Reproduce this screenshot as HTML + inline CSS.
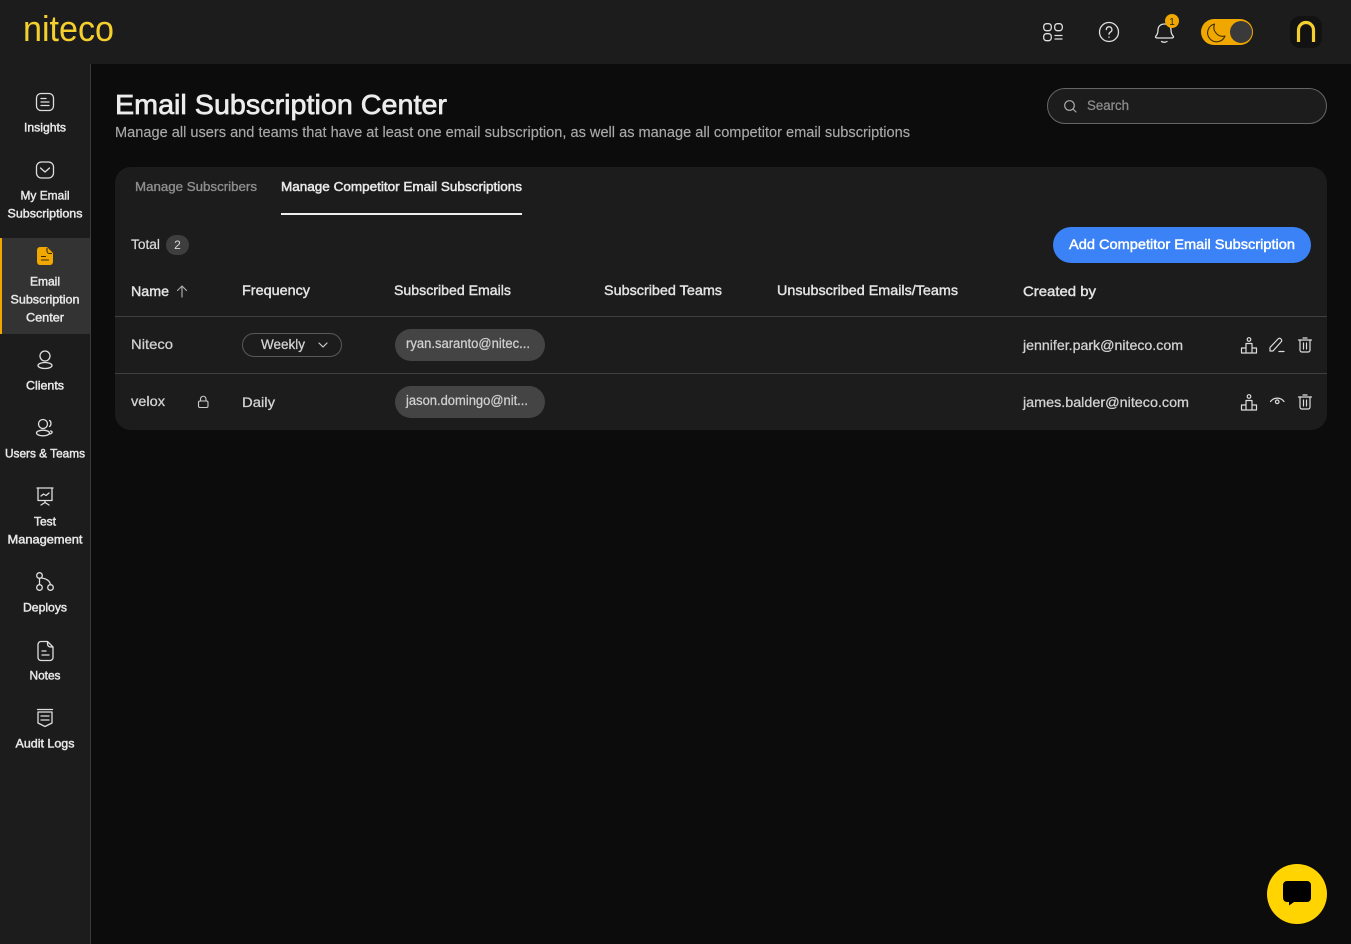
<!DOCTYPE html>
<html lang="en">
<head>
<meta charset="utf-8">
<title>Email Subscription Center</title>
<style>
html,body{margin:0;padding:0;width:1351px;height:944px;overflow:hidden;background:#0c0c0c;font-family:"Liberation Sans",sans-serif}
.b{position:absolute;box-sizing:border-box}
svg{position:absolute;left:0;top:0}
text{font-family:"Liberation Sans",sans-serif}
.nav{font-size:12px;fill:#e8e8e8;text-anchor:middle;stroke:#e8e8e8;stroke-width:.45px}
.t13{font-size:14px;fill:#d2d2d2;stroke:#d2d2d2;stroke-width:.28px}
.h{font-size:14px;fill:#e4e4e4;stroke:#e4e4e4;stroke-width:.4px}
.ic{fill:none;stroke:#dedede;stroke-width:1.300;stroke-linecap:round;stroke-linejoin:round}
</style>
</head>
<body>
<div class="b" style="left:0;top:0;width:1351px;height:64px;background:#1c1c1c"></div>
<div class="b" style="left:0;top:64px;width:91px;height:880px;background:#1c1c1c;border-right:1px solid #3a3a3a"></div>
<div class="b" style="left:0;top:238px;width:90px;height:96px;background:#333;border-left:2px solid #f0a800"></div>
<div class="b" style="left:1047px;top:88px;width:280px;height:36px;background:#1c1c1c;border:1px solid #666;border-radius:18px"></div>
<div class="b" style="left:115px;top:167px;width:1212px;height:263px;background:#1c1c1c;border-radius:16px"></div>
<div class="b" style="left:281px;top:213px;width:241px;height:2px;background:#eee"></div>
<div class="b" style="left:115px;top:316px;width:1212px;height:1px;background:#404040"></div>
<div class="b" style="left:115px;top:373px;width:1212px;height:1px;background:#404040"></div>
<div class="b" style="left:166px;top:235px;width:23px;height:20px;background:#3e3e3e;border-radius:10px"></div>
<div class="b" style="left:1053px;top:227px;width:258px;height:36px;background:#3b82f6;border-radius:18px"></div>
<div class="b" style="left:242px;top:333px;width:100px;height:24px;border:1px solid #5a5a5a;border-radius:12px"></div>
<div class="b" style="left:395px;top:329px;width:150px;height:32px;background:#444;border-radius:16px"></div>
<div class="b" style="left:395px;top:386px;width:150px;height:32px;background:#444;border-radius:16px"></div>
<div class="b" style="left:1267px;top:864px;width:60px;height:60px;background:#ffd400;border-radius:50%"></div>

<svg width="1351" height="944" viewBox="0 0 1351 944">
<!-- logo -->
<text x="23" y="41" font-size="36" fill="#f5cf2e" textLength="91" lengthAdjust="spacingAndGlyphs">niteco</text>

<!-- top icons -->
<g class="ic">
<rect x="1043.700" y="23.700" width="7.600" height="7" rx="2.800"/><rect x="1054.700" y="23.700" width="7.600" height="7" rx="2.800"/><rect x="1043.700" y="33.700" width="7.600" height="7" rx="2.800"/>
<path d="M1055 35.500h7M1055 39h7"/>
<circle cx="1109" cy="32" r="9.500"/>
<path d="M1106.300 29.600a2.800 2.800 0 1 1 4.200 2.400c-1 .6-1.500 1.100-1.500 2.200"/><path d="M1109 37v.2"/>
<path d="M1164.500 24c-4 0-6.500 2.500-6.500 6 0 3.500-1 5-2.500 6.500 0 1 1 1.500 2 1.500h14c1 0 2-.5 2-1.500-1.500-1.500-2.500-3-2.500-6.500 0-3.500-2.500-6-6.500-6z"/>
<path d="M1161.500 41.500c1.800 1 3.800 1 5.500 0"/>
</g>
<circle cx="1172" cy="21" r="7" fill="#f0a800"/>
<text x="1172" y="25" font-size="10" fill="#222" text-anchor="middle">1</text>

<rect x="1201" y="19" width="52" height="26" rx="13" fill="#f0a800"/>
<circle cx="1241" cy="32" r="11" fill="#3a3a3a"/>
<path d="M1214.500 24a9 9 0 1 0 10.500 12 9 9 0 0 1-10.500-12z" fill="none" stroke="#3a2c00" stroke-width="1.100" stroke-linejoin="round"/>

<rect x="1290" y="16" width="32" height="32" rx="10" fill="#121212"/>
<path d="M1298.500 42V30a7.500 7.500 0 0 1 15 0v12" fill="none" stroke="#f5cf2e" stroke-width="3.200"/>

<!-- search -->
<circle cx="1069.500" cy="105.500" r="4.800" fill="none" stroke="#aaa" stroke-width="1.200"/>
<path d="M1073 109l3 3" stroke="#aaa" stroke-width="1.200" stroke-linecap="round"/>
<text x="1087" y="110" font-size="13.500" fill="#8a8a8a" stroke="#8a8a8a" stroke-width=".3" textLength="42" lengthAdjust="spacingAndGlyphs">Search</text>

<!-- sidebar icons -->
<g class="ic">
<rect x="36.500" y="93.500" width="17" height="17" rx="4.500"/><path d="M41 98.500h5M41 102h8M41 105.500h8"/>
<rect x="36.500" y="162" width="17" height="16" rx="5"/><path d="M40.500 168l4.500 4 4.500-4"/>
<circle cx="45" cy="356" r="5"/><ellipse cx="45" cy="365.500" rx="7" ry="3"/>
<circle cx="43" cy="424" r="4.500"/><ellipse cx="43" cy="433" rx="6.500" ry="2.800"/>
<path d="M49.500 420.500c2 1 2 4.500 0 6M50.500 431c2 0 2.500 2-.5 3"/>
<path d="M37 488h16M38 488v12.500h14V488M45 500.500v2M41 505l4-2.500 4 2.500M41 496l2.500-2 2.500 1.500 3-2.500"/>
<circle cx="39.500" cy="575.500" r="2.800"/><circle cx="39.500" cy="587.500" r="2.800"/><circle cx="50.500" cy="587.500" r="2.800"/>
<path d="M39.500 578.500v6M41.500 578c4 .5 8 2 9 6.500"/>
<path d="M41 641.500h6.500l5.500 5.500v10.500a3 3 0 0 1-3 3h-9a3 3 0 0 1-3-3V644.500a3 3 0 0 1 3-3zM47.500 641.500v2.500a3 3 0 0 0 3 3h2.500M42 651h4M42 655h7"/>
<path d="M37.500 709.500h15M38 712v11l7 3.500 7-3.500v-11zM41 716h8M41 720h8"/>
</g>
<path d="M40 247h7l6 6v9a3 3 0 0 1-3 3H40a3 3 0 0 1-3-3v-12a3 3 0 0 1 3-3z" fill="#f0a800"/>
<path d="M47 248v3a2.500 2.500 0 0 0 2.500 2.500H52M41 256.500h5M41 260h8" fill="none" stroke="#3a2c00" stroke-width="1.100"/>

<!-- sidebar labels -->
<text class="nav" x="45" y="131.500" textLength="42" lengthAdjust="spacingAndGlyphs">Insights</text>
<text class="nav" x="45" y="199.500" textLength="49" lengthAdjust="spacingAndGlyphs">My Email</text>
<text class="nav" x="45" y="217.500" textLength="75" lengthAdjust="spacingAndGlyphs">Subscriptions</text>
<text class="nav" x="45" y="285.500" textLength="30" lengthAdjust="spacingAndGlyphs">Email</text>
<text class="nav" x="45" y="303.500" textLength="69" lengthAdjust="spacingAndGlyphs">Subscription</text>
<text class="nav" x="45" y="321.500" textLength="38" lengthAdjust="spacingAndGlyphs">Center</text>
<text class="nav" x="45" y="389.500" textLength="38" lengthAdjust="spacingAndGlyphs">Clients</text>
<text class="nav" x="45" y="457.500" textLength="80" lengthAdjust="spacingAndGlyphs">Users &amp; Teams</text>
<text class="nav" x="45" y="525.500" textLength="22" lengthAdjust="spacingAndGlyphs">Test</text>
<text class="nav" x="45" y="543.500" textLength="75" lengthAdjust="spacingAndGlyphs">Management</text>
<text class="nav" x="45" y="611.500" textLength="44" lengthAdjust="spacingAndGlyphs">Deploys</text>
<text class="nav" x="45" y="679.500" textLength="31" lengthAdjust="spacingAndGlyphs">Notes</text>
<text class="nav" x="45" y="747.500" textLength="59" lengthAdjust="spacingAndGlyphs">Audit Logs</text>

<!-- heading -->
<text x="115" y="114" font-size="28" fill="#ececec" stroke="#ececec" stroke-width=".7" textLength="332" lengthAdjust="spacingAndGlyphs">Email Subscription Center</text>
<text x="115" y="137" font-size="14.500" fill="#a8a8a8" stroke="#a8a8a8" stroke-width=".15" textLength="795" lengthAdjust="spacingAndGlyphs">Manage all users and teams that have at least one email subscription, as well as manage all competitor email subscriptions</text>

<!-- tabs -->
<text x="135" y="191" font-size="13" fill="#8e8e8e" stroke="#8e8e8e" stroke-width=".35" textLength="122" lengthAdjust="spacingAndGlyphs">Manage Subscribers</text>
<text x="281" y="191" font-size="13" fill="#e8e8e8" stroke="#e8e8e8" stroke-width=".5" textLength="241" lengthAdjust="spacingAndGlyphs">Manage Competitor Email Subscriptions</text>

<text x="131" y="249" font-size="13.500" fill="#dcdcdc" stroke="#dcdcdc" stroke-width=".2" textLength="29" lengthAdjust="spacingAndGlyphs">Total</text>
<text x="177.500" y="249" font-size="12" fill="#d8d8d8" text-anchor="middle">2</text>
<text x="1069" y="249" font-size="14" fill="#fff" stroke="#fff" stroke-width=".45" textLength="226" lengthAdjust="spacingAndGlyphs">Add Competitor Email Subscription</text>

<!-- table head -->
<text class="h" x="131" y="296" textLength="38" lengthAdjust="spacingAndGlyphs">Name</text>
<path d="M182 297v-11M177.500 290.500l4.500-4.500 4.500 4.500" fill="none" stroke="#aaa" stroke-width="1.200" stroke-linecap="round" stroke-linejoin="round"/>
<text class="h" x="242" y="295" textLength="68" lengthAdjust="spacingAndGlyphs">Frequency</text>
<text class="h" x="394" y="295" textLength="117" lengthAdjust="spacingAndGlyphs">Subscribed Emails</text>
<text class="h" x="604" y="295" textLength="118" lengthAdjust="spacingAndGlyphs">Subscribed Teams</text>
<text class="h" x="777" y="295" textLength="181" lengthAdjust="spacingAndGlyphs">Unsubscribed Emails/Teams</text>
<text class="h" x="1023" y="296" textLength="73" lengthAdjust="spacingAndGlyphs">Created by</text>

<!-- row 1 -->
<text class="t13" x="131" y="349" textLength="42" lengthAdjust="spacingAndGlyphs">Niteco</text>
<text class="t13" x="261" y="349" textLength="44" lengthAdjust="spacingAndGlyphs">Weekly</text>
<path d="M319 343l4 4 4-4" fill="none" stroke="#ccc" stroke-width="1.200" stroke-linecap="round" stroke-linejoin="round"/>
<text x="406" y="348" font-size="13.500" fill="#d0d0d0" stroke="#d0d0d0" stroke-width=".25" textLength="124" lengthAdjust="spacingAndGlyphs">ryan.saranto@nitec...</text>
<text class="t13" x="1023" y="350" textLength="160" lengthAdjust="spacingAndGlyphs">jennifer.park@niteco.com</text>

<!-- row 2 -->
<text class="t13" x="131" y="406" textLength="34" lengthAdjust="spacingAndGlyphs">velox</text>
<g fill="none" stroke="#ccc" stroke-width="1.100">
<rect x="198.500" y="401" width="9.500" height="6.500" rx="1.500"/><path d="M200.500 401v-2a2.700 2.700 0 0 1 5.500 0v2"/>
</g>
<text class="t13" x="242" y="407" textLength="33" lengthAdjust="spacingAndGlyphs">Daily</text>
<text x="406" y="405" font-size="13.500" fill="#d0d0d0" stroke="#d0d0d0" stroke-width=".25" textLength="122" lengthAdjust="spacingAndGlyphs">jason.domingo@nit...</text>
<text class="t13" x="1023" y="407" textLength="166" lengthAdjust="spacingAndGlyphs">james.balder@niteco.com</text>

<!-- action icons -->
<g fill="none" stroke="#dcdcdc" stroke-width="1.200" stroke-linejoin="round" stroke-linecap="round">
<circle cx="1249" cy="339.500" r="1.800"/><path d="M1246 353v-9.500h6V353M1241.500 353v-5h4.500M1252 348h4.500v5M1241.500 353h15"/>
<circle cx="1249" cy="396.500" r="1.800"/><path d="M1246 410v-9.500h6V410M1241.500 410v-5h4.500M1252 405h4.500v5M1241.500 410h15"/>
<path d="M1270 351v-3.500l8-8.500c1-1 2-1 3 0s1 2 0 3l-8 9zM1279 351.500h5"/>
<path d="M1270.500 401.500c3.500-4.500 10-4.500 13.500 0"/><circle cx="1277.200" cy="401.800" r="1.800"/>
<path d="M1298.500 340h13M1303 338h4M1300 340v10a2 2 0 0 0 2 2h6a2 2 0 0 0 2-2v-10M1303.500 343v6M1306.500 343v6"/>
<path d="M1298.500 397h13M1303 395h4M1300 397v10a2 2 0 0 0 2 2h6a2 2 0 0 0 2-2v-10M1303.500 400v6M1306.500 400v6"/>
</g>

<!-- chat -->
<path d="M1287 881h20a4 4 0 0 1 4 4v13a4 4 0 0 1-4 4h-13l-5 3.500v-3.500h-2a4 4 0 0 1-4-4v-13a4 4 0 0 1 4-4z" fill="#000"/>
</svg>
</body>
</html>
